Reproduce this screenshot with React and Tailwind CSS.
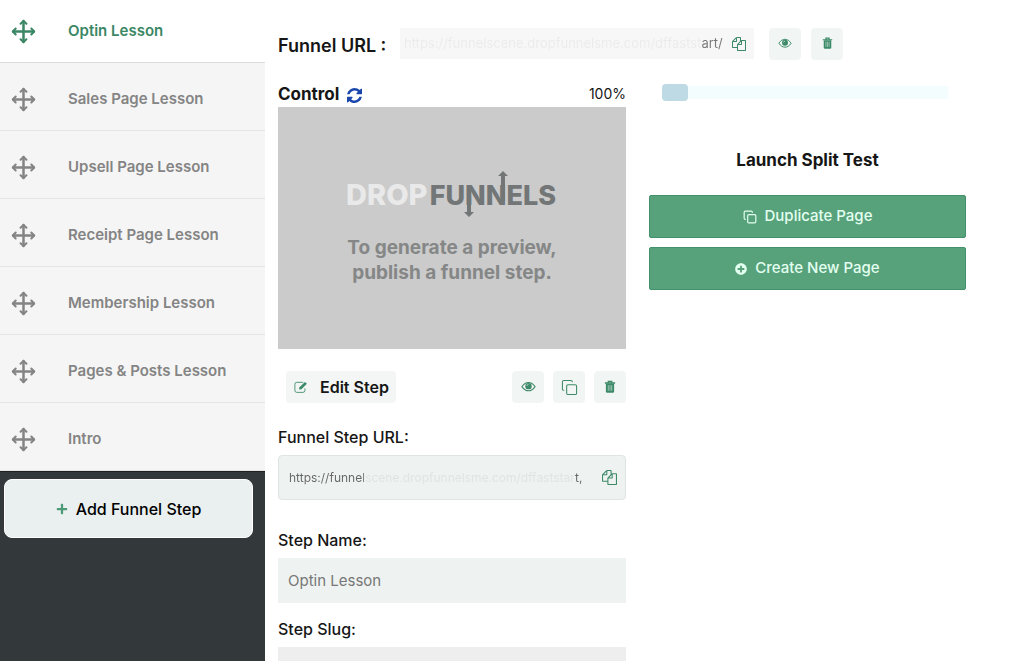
// src/App.jsx
import React from 'react';
import { Copy } from 'lucide-react';
import { FaPlus, FaPlusCircle } from 'react-icons/fa';

const steps = [
  'Optin Lesson',
  'Sales Page Lesson',
  'Upsell Page Lesson',
  'Receipt Page Lesson',
  'Membership Lesson',
  'Pages & Posts Lesson',
  'Intro'
];

const MoveIcon = ({ className }) => (
  <svg viewBox="0 0 24 24" fill="none" stroke="currentColor" strokeWidth="2" strokeLinecap="round" strokeLinejoin="round" className={className} aria-hidden="true">
    <path d="M12 2v20M2 12h20" strokeWidth="2.400" />
    <path d="M9.200 4.500L12 1.800l2.800 2.700M9.200 19.500l2.800 2.700 2.800-2.700M4.500 9.200L1.800 12l2.700 2.800M19.500 9.200l2.700 2.800-2.700 2.800" />
  </svg>
);

const RefreshIcon = ({ className }) => (
  <svg viewBox="0 128 1536 1536" fill="currentColor" className={className} aria-hidden="true">
    <path d="M1511 1056q0 5-1 7-64 268-268 434.5t-478 166.5q-146 0-282.5-55t-243.5-157l-129 129q-19 19-45 19t-45-19-19-45v-448q0-26 19-45t45-19h448q26 0 45 19t19 45-19 45l-137 137q71 66 161 102t187 36q134 0 250-65t186-179q11-17 53-117 8-23 30-23h192q13 0 22.5 9.5t9.5 22.5zm25-800v448q0 26-19 45t-45 19h-448q-26 0-45-19t-19-45 19-45l138-138q-148-137-349-137-134 0-250 65t-186 179q-11 17-53 117-8 23-30 23h-199q-13 0-22.5-9.5t-9.5-22.5v-7q65-268 270-434.5t480-166.5q146 0 284 55.5t245 156.5l130-129q19-19 45-19t45 19 19 45z" />
  </svg>
);

const FilesIcon = ({ className }) => (
  <svg viewBox="0 0 1792 1792" fill="currentColor" className={className} aria-hidden="true">
    <path d="M1696 384q40 0 68 28t28 68v1216q0 40-28 68t-68 28h-960q-40 0-68-28t-28-68v-288h-544q-40 0-68-28t-28-68v-672q0-40 20-88t48-76l408-408q28-28 76-48t88-20h416q40 0 68 28t28 68v328q68-40 128-40h416zm-544 213l-299 299h299v-299zm-640-384l-299 299h299v-299zm196 647l316-316v-416h-384v416q0 40-28 68t-68 28h-416v640h512v-256q0-40 20-88t48-76zm956 804v-1152h-384v416q0 40-28 68t-68 28h-416v640h896z" />
  </svg>
);

const EyeIcon = ({ className }) => (
  <svg viewBox="0 0 16 12" fill="none" stroke="currentColor" className={className} aria-hidden="true">
    <path d="M1 6C3 3 5.300 1.500 8 1.500S13 3 15 6c-2 3-4.300 4.500-7 4.500S3 9 1 6z" strokeWidth="1.100" />
    <circle cx="8" cy="5.500" r="3.400" fill="currentColor" stroke="none" />
    <path d="M6.300 5.300c0-1 .7-1.700 1.700-1.700" stroke="#eef3f2" strokeWidth=".7" />
  </svg>
);

const TrashIcon = ({ className }) => (
  <svg viewBox="0 0 14 16" fill="none" stroke="currentColor" className={className} aria-hidden="true">
    <path d="M1 3.500h12M5 3V1.500h4V3" strokeWidth="1.500" />
    <path d="M2.200 4h9.600v9.500q0 1.500-1.500 1.500H3.700q-1.500 0-1.500-1.500z" fill="currentColor" stroke="none" />
    <path d="M5 6v6.500M7 6v6.500M9 6v6.500" stroke="#dcece5" strokeWidth=".7" />
  </svg>
);

const EditIcon = ({ className }) => (
  <svg viewBox="0 0 16 14" fill="none" stroke="currentColor" className={className} aria-hidden="true">
    <path d="M10.500 1.500H3.200Q1 1.500 1 3.700v7Q1 13 3.200 13h7q2.300 0 2.300-2.300V8.500" strokeWidth="1" />
    <path d="M5.800 9.800l.4-2.600L12.500 1l2.300 2.200-6.300 6.200z" fill="currentColor" stroke="none" />
  </svg>
);

const Logo = () => (
  <svg viewBox="0 0 212 50" className="h-[50px] w-[212px]" role="img" aria-label="DropFunnels">
    <g fontFamily="Inter, sans-serif" fontWeight="800">
      <text x="0" y="36" fontSize="29" fill="#e9e9e9">DROP</text>
      <text x="210" y="36" fontSize="27" textAnchor="end" fill="#727676">FUNNELS</text>
    </g>
    <g fill="#727676">
      <path d="M121 20h4v23h3l-5 5-5-5h3z" />
      <path d="M155 32h4V7h3l-5-5-5 5h3z" />
    </g>
  </svg>
);

function IconButton({ label, children }) {
  return (
    <button
      aria-label={label}
      className="flex h-8 w-8 items-center justify-center rounded-sm bg-[#f1f5f4] text-[#3d8a68]"
    >
      {children}
    </button>
  );
}

function Sidebar() {
  return (
    <aside className="w-[265px] shrink-0 bg-[#33383b]">
      <nav>
        {steps.map((step, idx) => (
          <a
            key={step}
            href="#"
            className={
              idx === 0
                ? 'flex h-[63px] items-center gap-8 border-b border-[#dcdcdc] bg-white pl-[11px] text-[#3b8765]'
                : 'flex h-[68px] items-center gap-8 border-b border-[#e4e4e4] bg-[#f5f5f5] pt-[5px] pl-[11px] text-[#848484]'
            }
          >
            <MoveIcon className="h-[25px] w-[25px]" />
            <span className="text-[15px] font-semibold">{step}</span>
          </a>
        ))}
      </nav>
      <div className="border-t border-[#1e2021] pt-[7px] pr-3 pl-1">
        <button className="flex h-[59px] w-full items-center justify-center gap-2 rounded-lg border border-white bg-[#eaeff0] text-base font-medium text-black">
          <FaPlus size={12} className="text-[#4d9a76]" />
          Add Funnel Step
        </button>
      </div>
    </aside>
  );
}

export default function App() {
  return (
    <div className="flex h-screen overflow-hidden bg-white font-['Inter',sans-serif] text-[#161616]">
      <Sidebar />

      <main className="min-w-0 flex-1 pt-7 pr-[57px] pl-[13px]">
        {/* Funnel URL */}
        <div className="flex h-[31px] items-center">
          <label htmlFor="funnel-url" className="w-[122px] shrink-0 pt-[3px] text-[18px] font-semibold">
            Funnel URL :
          </label>
          <div className="flex h-[31px] w-[354px] items-center bg-[#f7f7f7] pr-2 pl-1">
            <input
              id="funnel-url"
              readOnly
              defaultValue="https://funnelscene.dropfunnelsme.com/dffaststart/"
              className="min-w-0 flex-1 bg-[linear-gradient(to_right,#ebebeb_298px,#777_298px)] bg-clip-text text-[13px] text-transparent outline-none"
            />
            <button aria-label="Copy funnel URL" className="text-[#3d8a68]">
              <FilesIcon className="h-[14px] w-[14px]" />
            </button>
          </div>
          <div className="ml-[15px] flex gap-[10px]">
            <IconButton label="View funnel">
              <EyeIcon className="w-[14px]" />
            </IconButton>
            <IconButton label="Delete funnel">
              <TrashIcon className="w-[11px]" />
            </IconButton>
          </div>
        </div>

        <div className="mt-6 grid grid-cols-[348fr_317fr] gap-[23px]">
          {/* Control */}
          <section className="min-w-0">
            <div className="flex h-6 items-center">
              <h2 className="text-[17px] font-bold">Control</h2>
              <button aria-label="Refresh preview" className="ml-2 text-[#1a45ad]">
                <RefreshIcon className="h-[15px] w-[15px]" />
              </button>
              <span className="ml-auto pb-[3px] text-[14px]">100%</span>
            </div>
            <div className="flex h-[242px] flex-col items-center bg-[#cbcbcb] pt-[62px]">
              <Logo />
              <p className="mt-4 text-center text-[19px] leading-[25px] font-bold text-[#858787]">
                To generate a preview,
                <br />
                publish a funnel step.
              </p>
            </div>

            <div className="mt-[22px] flex h-8 items-center gap-[9px] pl-2">
              <button className="mr-auto flex h-8 w-[110px] items-center gap-3 rounded-sm bg-[#f3f6f5] pl-2 text-base font-semibold whitespace-nowrap">
                <EditIcon className="w-[14px] shrink-0 text-[#3d8a68]" />
                Edit Step
              </button>
              <IconButton label="View step">
                <EyeIcon className="w-[15px]" />
              </IconButton>
              <IconButton label="Duplicate step">
                <Copy size={17} strokeWidth={1.5} />
              </IconButton>
              <IconButton label="Delete step">
                <TrashIcon className="w-[12px]" />
              </IconButton>
            </div>

            <label htmlFor="step-url" className="mt-[22px] block text-base leading-6 font-medium">
              Funnel Step URL:
            </label>
            <div className="mt-[6px] flex h-[45px] items-center rounded-sm border border-[#dfe4e3] bg-[#eef2f1] pr-2 pl-[10px]">
              <input
                id="step-url"
                readOnly
                defaultValue="https://funnelscene.dropfunnelsme.com/dffaststart,"
                className="mr-3 min-w-0 flex-1 bg-[linear-gradient(to_right,#666_75px,#dfe3e2_75px,#dfe3e2_286px,#666_286px)] bg-clip-text text-[12px] text-transparent outline-none"
              />
              <button aria-label="Copy step URL" className="text-[#3d8a68]">
                <FilesIcon className="h-[15px] w-[15px]" />
              </button>
            </div>

            <label htmlFor="step-name" className="mt-7 block text-base leading-6 font-medium">
              Step Name:
            </label>
            <input
              id="step-name"
              defaultValue="Optin Lesson"
              className="mt-[6px] block h-[45px] w-full bg-[#eef2f1] px-[10px] text-[15px] text-[#777] outline-none"
            />

            <label htmlFor="step-slug" className="mt-[14px] block text-base leading-6 font-medium">
              Step Slug:
            </label>
            <input id="step-slug" className="mt-[6px] block h-[45px] w-full bg-[#eeeeef] px-[10px] outline-none" />
          </section>

          {/* Split test */}
          <section>
            <div className="mt-px ml-[13px] flex h-[17px] w-[286px] items-center">
              <div className="h-[17px] w-[26px] rounded bg-[#bddae5]" />
              <div className="h-[13px] flex-1 bg-[#f4fdfd]" />
            </div>
            <h2 className="mt-[47px] text-center text-[17px] leading-6 font-bold">Launch Split Test</h2>
            <div className="mt-[23px] flex flex-col gap-[9px]">
              <button className="flex h-[43px] items-center justify-center gap-2 rounded-xs border border-[#43916c] bg-[#58a27b] text-[15px] font-medium text-[#e3fff0]">
                <Copy size={14} strokeWidth={2} />
                Duplicate Page
              </button>
              <button className="flex h-[43px] items-center justify-center gap-2 rounded-xs border border-[#43916c] bg-[#58a27b] text-[15px] font-medium text-[#e3fff0]">
                <FaPlusCircle size={12} />
                Create New Page
              </button>
            </div>
          </section>
        </div>
      </main>
    </div>
  );
}
